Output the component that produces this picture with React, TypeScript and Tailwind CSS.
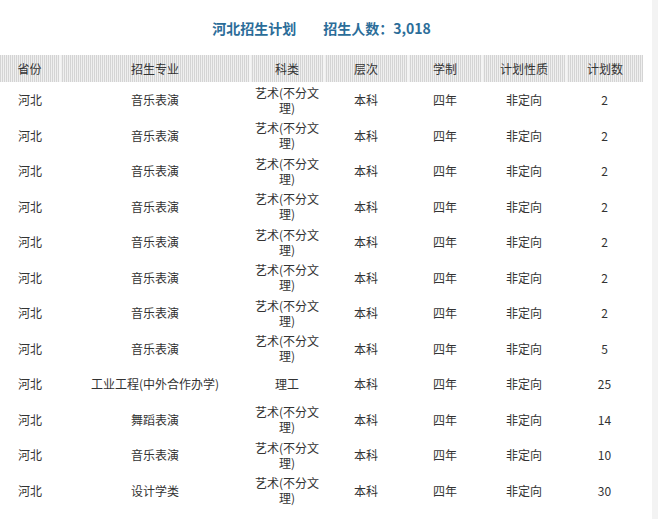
const rows: [string, string, string, string, string, string, string][] = [
  ['河北', '音乐表演', '艺术(不分文理)', '本科', '四年', '非定向', '2'],
  ['河北', '音乐表演', '艺术(不分文理)', '本科', '四年', '非定向', '2'],
  ['河北', '音乐表演', '艺术(不分文理)', '本科', '四年', '非定向', '2'],
  ['河北', '音乐表演', '艺术(不分文理)', '本科', '四年', '非定向', '2'],
  ['河北', '音乐表演', '艺术(不分文理)', '本科', '四年', '非定向', '2'],
  ['河北', '音乐表演', '艺术(不分文理)', '本科', '四年', '非定向', '2'],
  ['河北', '音乐表演', '艺术(不分文理)', '本科', '四年', '非定向', '2'],
  ['河北', '音乐表演', '艺术(不分文理)', '本科', '四年', '非定向', '5'],
  ['河北', '工业工程(中外合作办学)', '理工', '本科', '四年', '非定向', '25'],
  ['河北', '舞蹈表演', '艺术(不分文理)', '本科', '四年', '非定向', '14'],
  ['河北', '音乐表演', '艺术(不分文理)', '本科', '四年', '非定向', '10'],
  ['河北', '设计学类', '艺术(不分文理)', '本科', '四年', '非定向', '30'],
];

const headers = ['省份', '招生专业', '科类', '层次', '学制', '计划性质', '计划数'];
const widths = ['w-[60px]', 'w-[190px]', 'w-[74px]', 'w-[84px]', 'w-[74px]', 'w-[84px]', 'w-[77px]'];

export default function App() {
  return (
    <div
      className="relative w-[671px] h-[519px] overflow-hidden bg-white text-[#333]"
      style={{ fontFamily: '"Microsoft YaHei", "Noto Sans CJK SC", sans-serif' }}
    >
      {/* title */}
      <div className="w-[643px] pt-[18px] h-[55px] flex justify-center gap-[27px] text-[14px] leading-[20px] font-bold text-[#2b6d99]">
        <span>河北招生计划</span>
        <span>招生人数：3,018</span>
      </div>

      <table className="w-[643px] table-fixed border-collapse text-[12px] leading-[15px]">
        <colgroup>
          {widths.map((w, i) => (
            <col key={i} className={w} />
          ))}
        </colgroup>
        <thead>
          <tr className="h-[27px] bg-[repeating-linear-gradient(90deg,#d4d4d4_0px,#d4d4d4_1px,#efefef_1px,#efefef_2px)]">
            {headers.map((h, i) => (
              <th
                key={h}
                className={`font-normal text-center p-0 ${i < 6 ? 'border-r-2 border-r-[#f4f4f4]' : ''}`}
              >
                {h}
              </th>
            ))}
          </tr>
        </thead>
        <tbody>
          {rows.map((r, ri) => (
            <tr key={ri} className="h-[35.5px]">
              {r.map((c, ci) => (
                <td key={ci} className={`text-center p-0 ${ci === 2 ? 'px-[4px]' : ''}`}>
                  {c}
                </td>
              ))}
            </tr>
          ))}
        </tbody>
      </table>

      {/* faint scroll track edge */}
      <div className="absolute top-0 left-[652px] w-[6px] h-full bg-[#f3f3f3]" />
    </div>
  );
}
